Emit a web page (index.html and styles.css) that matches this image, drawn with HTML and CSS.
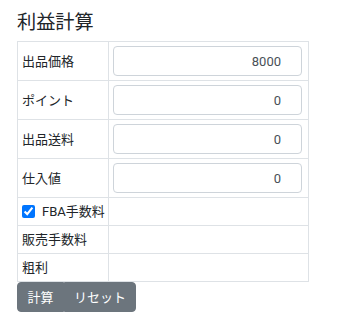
FILE: index.html
```html
<!DOCTYPE html>
<html lang="ja">
<head>
<meta charset="utf-8">
<link rel="stylesheet" href="styles.css">
</head>
<body>
<div class="page">
  <h5 class="title">利益計算</h5>
  <table class="calc">
    <colgroup><col class="c1"><col class="c2"></colgroup>
    <tr><th>出品価格</th><td><input class="field" type="text" value="8000"></td></tr>
    <tr><th>ポイント</th><td><input class="field" type="text" value="0"></td></tr>
    <tr><th>出品送料</th><td><input class="field" type="text" value="0"></td></tr>
    <tr><th>仕入値</th><td><input class="field" type="text" value="0"></td></tr>
    <tr class="short"><th><label class="check"><input type="checkbox" checked><span>FBA手数料</span></label></th><td></td></tr>
    <tr class="short"><th>販売手数料</th><td></td></tr>
    <tr class="short"><th>粗利</th><td></td></tr>
  </table>
  <div class="btns">
    <button class="btn first">計算</button><button class="btn second">リセット</button>
  </div>
</div>
</body>
</html>
```
FILE: styles.css
```css
html, body {
  margin: 0;
  padding: 0;
  background: #fff;
}
body {
  font-family: Roboto, "Liberation Sans", "Noto Sans CJK JP", sans-serif;
  color: #212529;
  font-size: 13px;
}
.page {
  padding: 11px 0 0 17px;
}
.title {
  margin: 0 0 7px 0;
  font-size: 19.2px;
  line-height: 23px;
  font-weight: 400;
}
.calc {
  border-collapse: collapse;
  table-layout: fixed;
  width: 291px;
}
.c1 {
  width: 91px;
}
.c2 {
  width: 200px;
}
.calc th, .calc td {
  border: 1px solid #dee2e6;
  padding: 4px;
  font-weight: 400;
  text-align: left;
  vertical-align: middle;
  line-height: 19px;
  white-space: nowrap;
  overflow: visible;
}
.calc tr.short th, .calc tr.short td {
  height: 19px;
}
.field {
  display: block;
  box-sizing: border-box;
  width: 189px;
  height: 30px;
  margin: 0;
  padding: 0 20px 0 8px;
  border: 1px solid #ced4da;
  border-radius: 4px;
  font-family: inherit;
  font-size: 13px;
  color: #495057;
  text-align: right;
  background: #fff;
}
.check {
  display: flex;
  align-items: center;
  gap: 7px;
}
.check input {
  margin: 0;
  width: 13px;
  height: 13px;
  flex: none;
  accent-color: #0075ff;
}
.btns {
  display: flex;
}
.btn {
  height: 30px;
  padding: 0 9px;
  border: 1px solid #6c757d;
  background: #6c757d;
  color: #fff;
  font-family: inherit;
  font-size: 13px;
  line-height: 19px;
  margin: 0;
  white-space: nowrap;
}
.first {
  border-radius: 4px 0 0 4px;
  width: 47px;
}
.second {
  border-radius: 0 4px 4px 0;
  width: 72px;
}
```
